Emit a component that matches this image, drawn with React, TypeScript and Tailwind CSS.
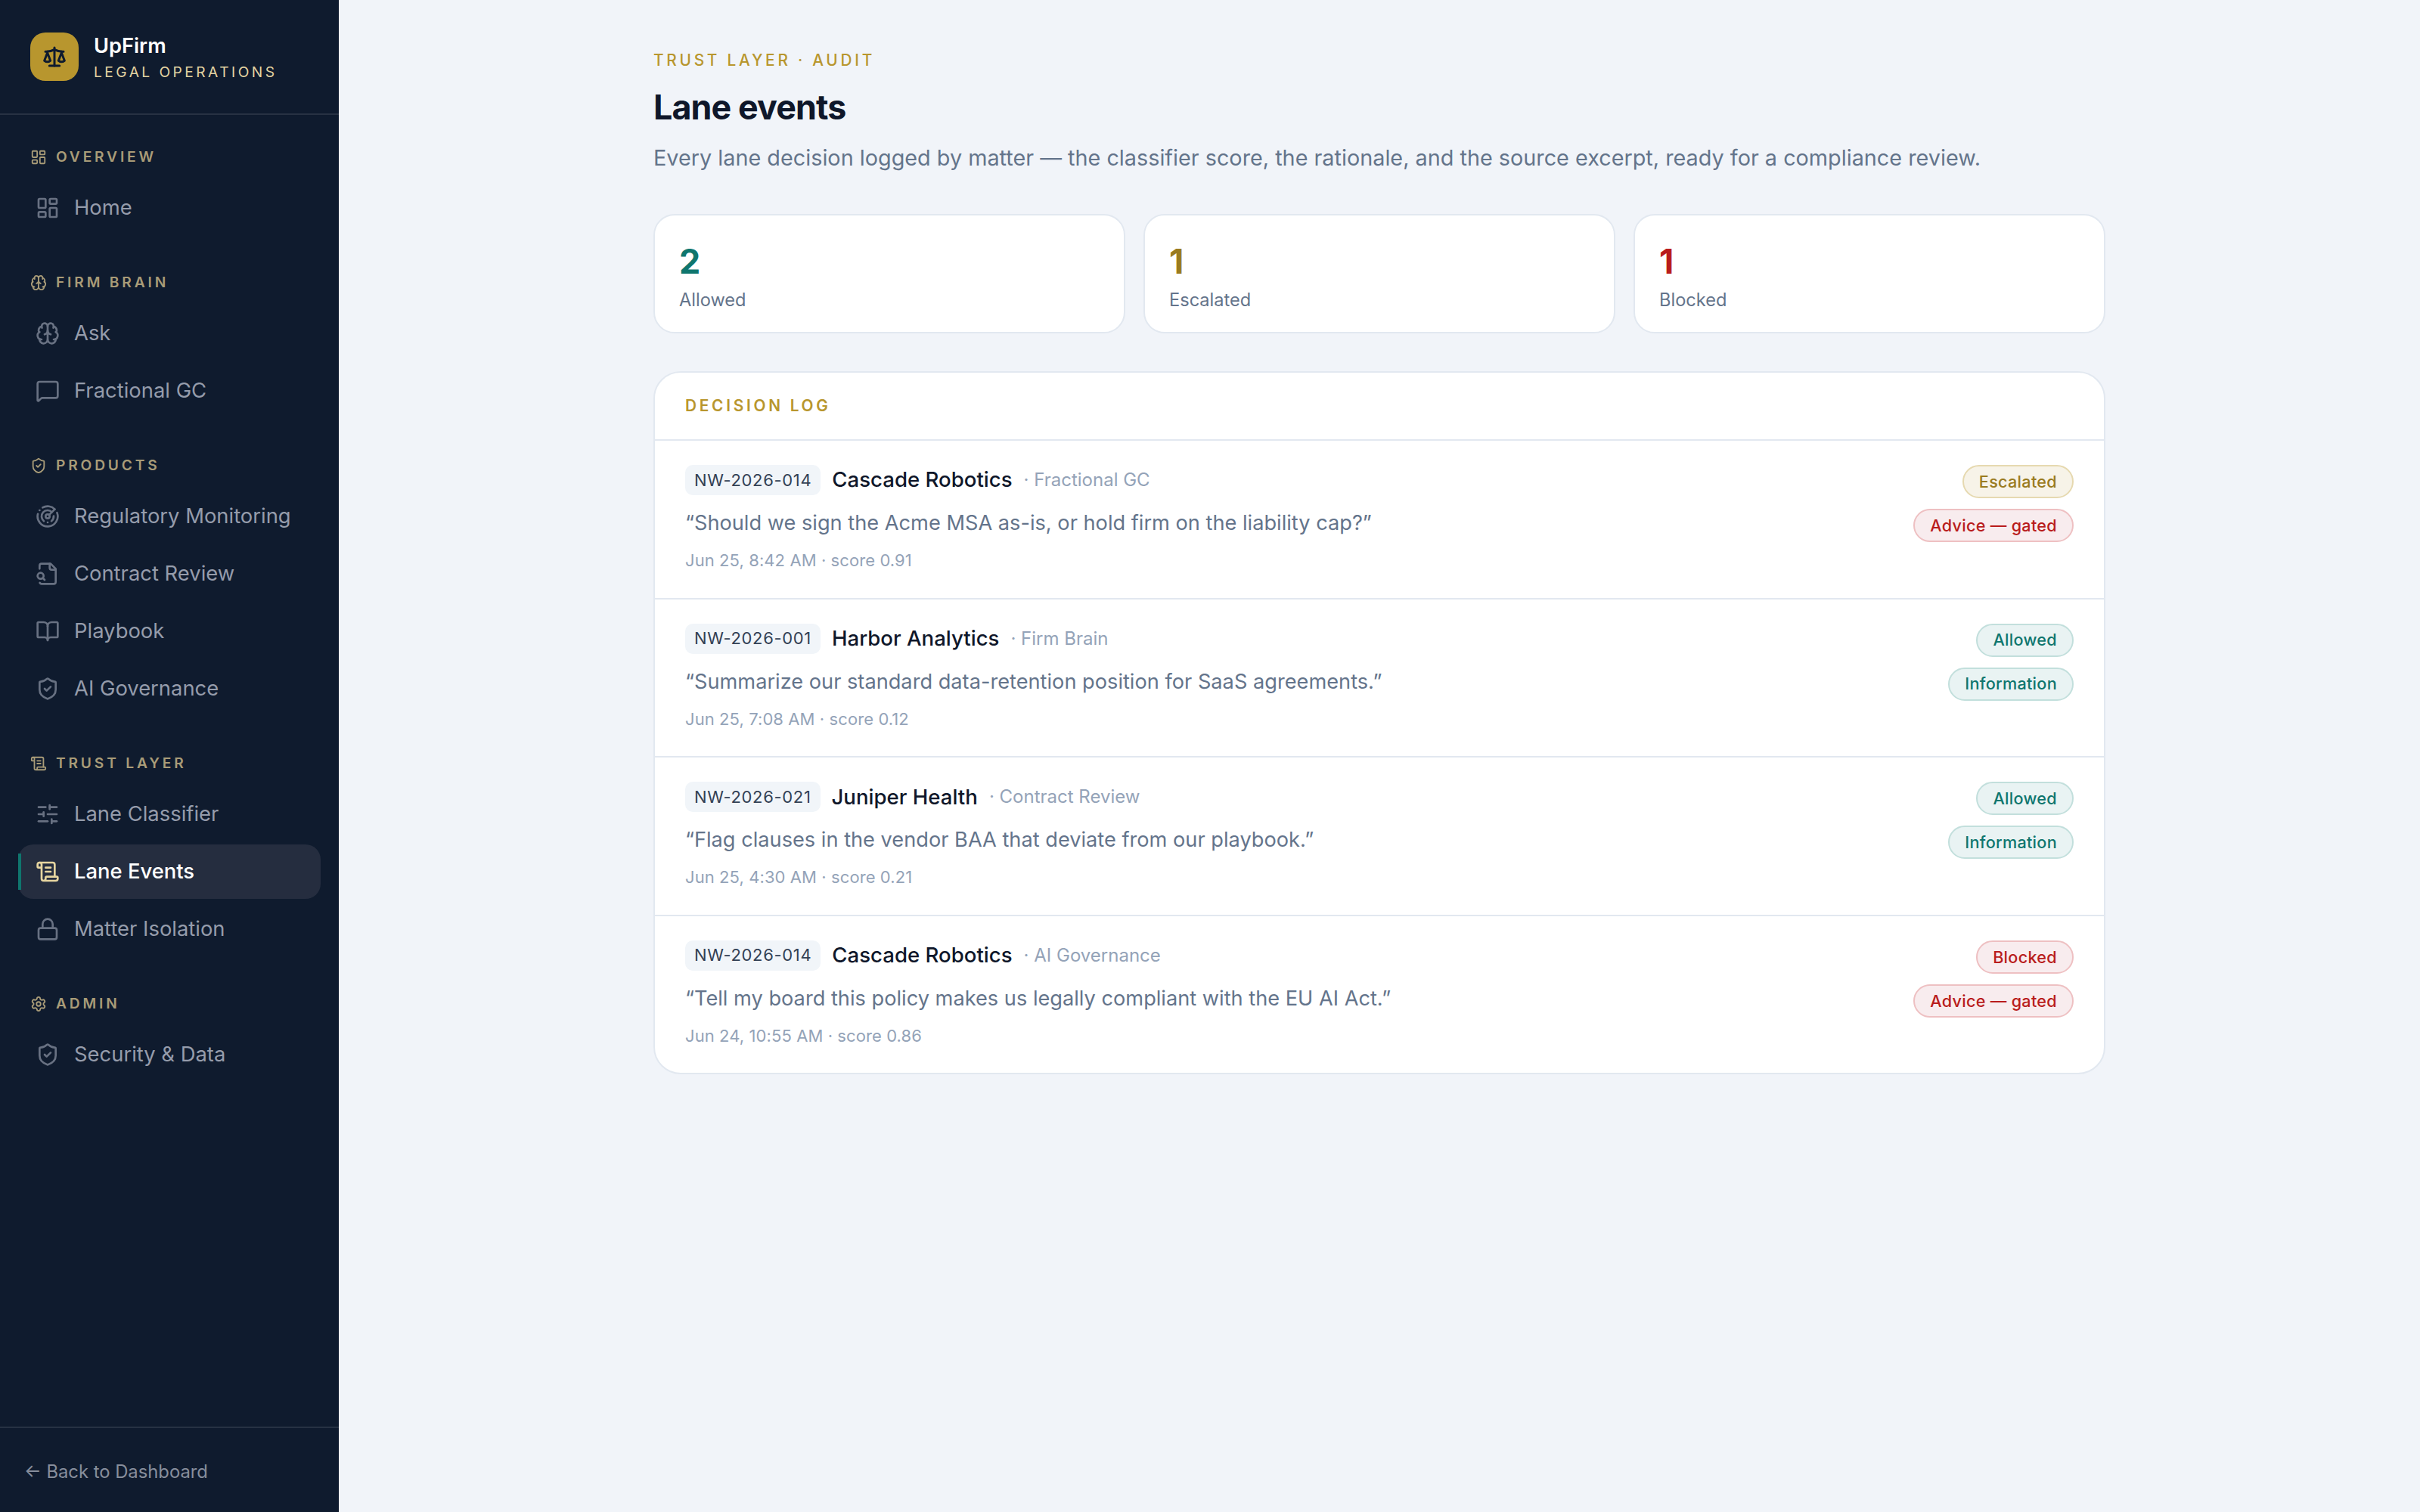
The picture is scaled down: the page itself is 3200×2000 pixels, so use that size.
import React from "react";
import {
  LayoutDashboard, Brain, MessageSquare, ShieldCheck, Radar, BookOpen,
  ScrollText, SlidersHorizontal, Lock, Settings, Scale,
} from "lucide-react";

type Ico = React.ComponentType<{ className?: string; strokeWidth?: number }>;
type Item = { label: string; icon: Ico; active?: boolean };
type Section = { label: string; icon: Ico; items: Item[] };

function FileSearchLeft({ className, strokeWidth = 2 }: { className?: string; strokeWidth?: number }) {
  return (
    <svg viewBox="0 0 24 24" fill="none" stroke="currentColor" strokeWidth={strokeWidth} strokeLinecap="round" strokeLinejoin="round" className={className}>
      <path d="M14 2v4a2 2 0 0 0 2 2h4" />
      <path d="M4.268 21a2 2 0 0 0 1.727 1H18a2 2 0 0 0 2-2V7l-5-5H6a2 2 0 0 0-2 2v3" />
      <path d="m9 18-1.5-1.5" />
      <circle cx="5" cy="14" r="3" />
    </svg>
  );
}

const sections: Section[] = [
  { label: "OVERVIEW", icon: LayoutDashboard, items: [{ label: "Home", icon: LayoutDashboard }] },
  { label: "FIRM BRAIN", icon: Brain, items: [{ label: "Ask", icon: Brain }, { label: "Fractional GC", icon: MessageSquare }] },
  {
    label: "PRODUCTS", icon: ShieldCheck, items: [
      { label: "Regulatory Monitoring", icon: Radar },
      { label: "Contract Review", icon: FileSearchLeft },
      { label: "Playbook", icon: BookOpen },
      { label: "AI Governance", icon: ShieldCheck },
    ],
  },
  {
    label: "TRUST LAYER", icon: ScrollText, items: [
      { label: "Lane Classifier", icon: SlidersHorizontal },
      { label: "Lane Events", icon: ScrollText, active: true },
      { label: "Matter Isolation", icon: Lock },
    ],
  },
  { label: "ADMIN", icon: Settings, items: [{ label: "Security & Data", icon: ShieldCheck }] },
];

const badgeStyles = {
  gold: "bg-[#f7f3e8] border-[#e6d9b0] text-[#9a7b1f]",
  red: "bg-[#f8ecee] border-[#eec0c2] text-[#b91c1c]",
  teal: "bg-[#e9f3f3] border-[#c2dfdc] text-[#0f766e]",
};

type Row = {
  id: string; name: string; src: string; quote: string; meta: string;
  badges: { text: string; tone: keyof typeof badgeStyles }[];
};

const rows: Row[] = [
  {
    id: "NW-2026-014", name: "Cascade Robotics", src: "· Fractional GC",
    quote: "“Should we sign the Acme MSA as-is, or hold firm on the liability cap?”",
    meta: "Jun 25, 8:42 AM · score 0.91",
    badges: [{ text: "Escalated", tone: "gold" }, { text: "Advice — gated", tone: "red" }],
  },
  {
    id: "NW-2026-001", name: "Harbor Analytics", src: "· Firm Brain",
    quote: "“Summarize our standard data-retention position for SaaS agreements.”",
    meta: "Jun 25, 7:08 AM · score 0.12",
    badges: [{ text: "Allowed", tone: "teal" }, { text: "Information", tone: "teal" }],
  },
  {
    id: "NW-2026-021", name: "Juniper Health", src: "· Contract Review",
    quote: "“Flag clauses in the vendor BAA that deviate from our playbook.”",
    meta: "Jun 25, 4:30 AM · score 0.21",
    badges: [{ text: "Allowed", tone: "teal" }, { text: "Information", tone: "teal" }],
  },
  {
    id: "NW-2026-014", name: "Cascade Robotics", src: "· AI Governance",
    quote: "“Tell my board this policy makes us legally compliant with the EU AI Act.”",
    meta: "Jun 24, 10:55 AM · score 0.86",
    badges: [{ text: "Blocked", tone: "red" }, { text: "Advice — gated", tone: "red" }],
  },
];

const stats = [
  { n: "2", label: "Allowed", cls: "text-[#0f766e]" },
  { n: "1", label: "Escalated", cls: "text-[#9a7b1f]" },
  { n: "1", label: "Blocked", cls: "text-[#b91c1c]" },
];

function Sidebar() {
  return (
    <aside className="w-[448px] shrink-0 h-full bg-[#0f1b2e] flex flex-col">
      <div className="h-[152px] shrink-0 border-b-2 border-white/10 flex items-start gap-5 pl-10 pt-[43px]">
        <div className="w-16 h-16 rounded-[20px] bg-[#b8962e] flex items-center justify-center">
          <Scale className="w-8 h-8 text-[#0f1b2e]" strokeWidth={2.25} />
        </div>
        <div className="flex flex-col">
          <div className="text-[27.2px] leading-[36px] font-semibold text-white">UpFirm</div>
          <div className="text-[19.2px] leading-[24px] mt-[4px] tracking-[0.18em] text-[#e3d3a1]">LEGAL OPERATIONS</div>
        </div>
      </div>
      <nav className="flex-1 px-6 pt-[42px]">
        {sections.map((s) => (
          <div key={s.label} className="mb-[49px]">
            <div className="h-[28px] pl-[16px] flex items-center gap-[12px] text-[#a99c78] mb-[17px]">
              <s.icon className="w-[22px] h-[22px]" strokeWidth={2} />
              <span className="text-[19.2px] font-semibold tracking-[0.2em] leading-none">{s.label}</span>
            </div>
            <div className="flex flex-col gap-1">
              {s.items.map((it) => (
                <div
                  key={it.label}
                  className={
                    it.active
                      ? "relative h-[72px] rounded-[20px] bg-[#252d3f] pl-[23px] flex items-center gap-[19px] text-white font-medium"
                      : "h-[72px] rounded-[20px] pl-[23px] flex items-center gap-[19px] text-[#959cab]"
                  }
                >
                  {it.active && <span className="absolute left-0 top-3 bottom-3 w-1 bg-[#0f766e]" />}
                  <it.icon className={it.active ? "w-8 h-8 text-[#e6d5a0]" : "w-8 h-8 text-[#687182]"} strokeWidth={2} />
                  <span className="text-[27.4px] leading-none">{it.label}</span>
                </div>
              ))}
            </div>
          </div>
        ))}
      </nav>
      <div className="h-[113px] shrink-0 border-t-2 border-white/10 flex items-center pl-[32px] pt-[4px] text-[23.8px] text-[#878e9c]">
        ← Back to Dashboard
      </div>
    </aside>
  );
}

export default function App() {
  return (
    <div className="h-screen w-full flex bg-[#f1f4f9] font-['Inter',sans-serif]">
      <Sidebar />
      <main className="flex-1 flex justify-center">
        <div className="w-[1920px] pt-[64px]">
          <div className="text-[20.8px] leading-[32px] font-medium tracking-[0.18em] text-[#b8962e]">TRUST LAYER · AUDIT</div>
          <h1 className="text-[44.8px] leading-[56px] mt-[18px] font-bold tracking-[-0.02em] text-[#0f172a]">Lane events</h1>
          <p className="text-[28.8px] leading-[40px] mt-[19px] text-[#64748b]">
            Every lane decision logged by matter — the classifier score, the rationale, and the source excerpt, ready for a compliance review.
          </p>
          <div className="grid grid-cols-3 gap-6 mt-[54px]">
            {stats.map((s) => (
              <div key={s.label} className="h-[158px] rounded-[28px] border-2 border-[#e2e8f0] bg-white px-[32px] pt-[33px]">
                <div className={`text-[44.8px] leading-[56px] font-bold ${s.cls}`}>{s.n}</div>
                <div className="text-[23.6px] leading-[32px] mt-[7px] text-[#64748b]">{s.label}</div>
              </div>
            ))}
          </div>
          <div className="mt-[50px] rounded-[36px] border-2 border-[#e2e8f0] bg-white overflow-hidden">
            <div className="h-[90px] border-b-2 border-[#e2e8f0] px-[40px] flex items-center text-[20.8px] font-semibold tracking-[0.18em] text-[#b8962e]">
              DECISION LOG
            </div>
            {rows.map((r, i) => (
              <div key={i} className={i < 3 ? "h-[209.6px] border-b-2 border-[#e2e8f0] px-[40px] pt-[32px] flex justify-between" : "h-[207px] px-[40px] pt-[32px] flex justify-between"}>
                <div>
                  <div className="h-[40px] flex items-center">
                    <span className="h-[40px] px-[12px] rounded-[10px] bg-[#f1f5f9] text-[22px] tracking-[0.03em] text-[#334155] flex items-center">{r.id}</span>
                    <span className="ml-[15px] text-[27.6px] font-medium text-[#0f172a]">{r.name}</span>
                    <span className="ml-[15px] text-[24px] text-[#94a3b8]">{r.src}</span>
                  </div>
                  <div className="mt-[17px] text-[27.2px] leading-[40px] text-[#64748b]">{r.quote}</div>
                  <div className="mt-[15px] text-[22px] leading-[28px] tracking-[0.004em] text-[#94a3b8]">{r.meta}</div>
                </div>
                <div className="flex flex-col items-end gap-[14px]">
                  {r.badges.map((b) => (
                    <span key={b.text} className={`h-[44px] px-[20px] rounded-full border-2 text-[21.6px] tracking-[0.014em] font-medium flex items-center ${badgeStyles[b.tone]}`}>{b.text}</span>
                  ))}
                </div>
              </div>
            ))}
          </div>
        </div>
      </main>
    </div>
  );
}
